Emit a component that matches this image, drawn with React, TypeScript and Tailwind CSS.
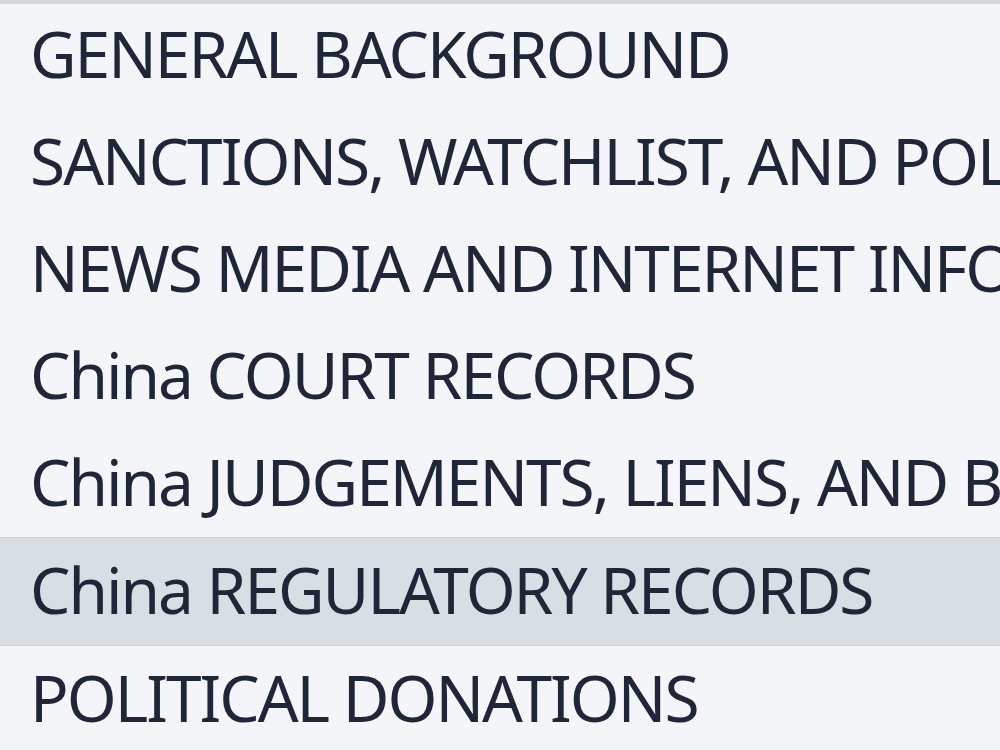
export default function App() {
  const items = [
    "GENERAL BACKGROUND",
    "SANCTIONS, WATCHLIST, AND POLITICALLY EXPOSED PERSONS",
    "NEWS MEDIA AND INTERNET INFORMATION",
    "China COURT RECORDS",
    "China JUDGEMENTS, LIENS, AND BANKRUPTCIES",
    "China REGULATORY RECORDS",
    "POLITICAL DONATIONS",
  ];
  const active = 5;
  return (
    <div className="w-[1000px] h-[750px] overflow-hidden bg-[#f4f5f8] border-t-[4px] border-[#d3d7de]">
      <ul
        className="flex flex-col -mt-[2px]"
        style={{ fontFamily: '"Noto Sans", "Open Sans", sans-serif' }}
      >
        {items.map((t, i) => (
          <li
            key={t}
            className={
              "flex items-center pl-[30px] pb-[3px] whitespace-nowrap text-[64px] tracking-[-2px] text-[#1e2637] " +
              (i === active
                ? "h-[109px] bg-[#d9dde4] border-y-[1.5px] border-[#cdd1d9]"
                : "h-[107px]")
            }
          >
            {t}
          </li>
        ))}
      </ul>
    </div>
  );
}
